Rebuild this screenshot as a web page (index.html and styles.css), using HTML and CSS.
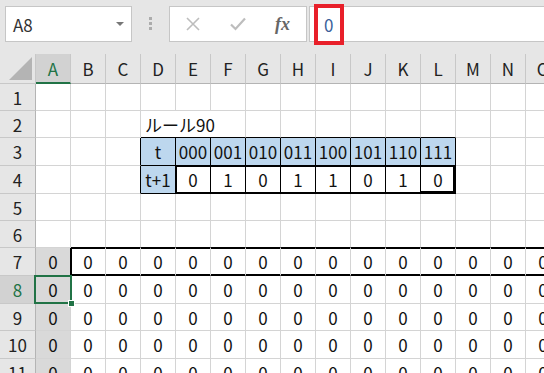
FILE: index.html
```html
<!DOCTYPE html>
<html lang="ja">
<head>
    <meta charset="UTF-8">
    <meta name="viewport" content="width=device-width, initial-scale=1.0">
    <title>ルール90</title>
    <link rel="stylesheet" href="styles.css">
</head>
<body>
    <div class="topbar">
        <div class="namebox">
            <span>A8</span>
            <span class="caret"></span>
        </div>
        <div class="dots"><span></span><span></span><span></span></div>
        <div class="fxbox">
            <span class="fxbtn">
                <svg width="14" height="14" viewBox="0 0 14 14"><path d="M1 1 L13 13 M13 1 L1 13" stroke="#bdbdbd" stroke-width="1.6" fill="none"/></svg>
            </span>
            <span class="fxbtn">
                <svg width="16" height="14" viewBox="0 0 16 14"><path d="M1 7.5 L5.5 12 L15 1.5" stroke="#bdbdbd" stroke-width="2.2" fill="none"/></svg>
            </span>
            <span class="fxbtn fx">fx</span>
        </div>
        <div class="fxinput">
            <span>0</span>
            <span class="mark"></span>
        </div>
    </div>

    <div class="sheet">
        <!-- header -->
        <div class="c h corner"><svg width="23" height="23" viewBox="0 0 23 23"><path d="M23 0 L23 23 L0 23 Z" fill="#b4b4b4"/></svg></div>
        <div class="c h ch sel-h">A</div>
        <div class="c h ch">B</div>
        <div class="c h ch">C</div>
        <div class="c h ch">D</div>
        <div class="c h ch">E</div>
        <div class="c h ch">F</div>
        <div class="c h ch">G</div>
        <div class="c h ch">H</div>
        <div class="c h ch">I</div>
        <div class="c h ch">J</div>
        <div class="c h ch">K</div>
        <div class="c h ch">L</div>
        <div class="c h ch">M</div>
        <div class="c h ch">N</div>
        <div class="c h ch">O</div>

        <!-- 1 -->
        <div class="c h rh">1</div>
        <div class="c"></div><div class="c"></div><div class="c"></div><div class="c"></div><div class="c"></div>
        <div class="c"></div><div class="c"></div><div class="c"></div><div class="c"></div><div class="c"></div>
        <div class="c"></div><div class="c"></div><div class="c"></div><div class="c"></div><div class="c"></div>

        <!-- 2 -->
        <div class="c h rh">2</div>
        <div class="c"></div><div class="c"></div><div class="c"></div>
        <div class="c title bk-b">ルール90</div>
        <div class="c bk-b"></div><div class="c bk-b"></div><div class="c bk-b"></div>
        <div class="c bk-b"></div><div class="c bk-b"></div><div class="c bk-b"></div>
        <div class="c"></div><div class="c"></div><div class="c"></div>

        <!-- 3 -->
        <div class="c h rh">3</div>
        <div class="c"></div><div class="c"></div><div class="c bk-r"></div>
        <div class="c blue bk">t</div>
        <div class="c blue bk">000</div>
        <div class="c blue bk">001</div>
        <div class="c blue bk">010</div>
        <div class="c blue bk">011</div>
        <div class="c blue bk">100</div>
        <div class="c blue bk">101</div>
        <div class="c blue bk">110</div>
        <div class="c blue bk">111</div>
        <div class="c"></div><div class="c"></div><div class="c"></div>

        <!-- 4 -->
        <div class="c h rh">4</div>
        <div class="c"></div><div class="c"></div><div class="c bk-r"></div>
        <div class="c blue bk">t+1</div>
        <div class="c bk thick first">0</div>
        <div class="c bk thick">1</div>
        <div class="c bk thick">0</div>
        <div class="c bk thick">1</div>
        <div class="c bk thick">1</div>
        <div class="c bk thick">0</div>
        <div class="c bk thick">1</div>
        <div class="c bk thick last">0</div>
        <div class="c"></div><div class="c"></div><div class="c"></div>

        <!-- 5 -->
        <div class="c h rh">5</div>
        <div class="c"></div><div class="c"></div><div class="c"></div><div class="c"></div><div class="c"></div>
        <div class="c"></div><div class="c"></div><div class="c"></div><div class="c"></div><div class="c"></div>
        <div class="c"></div><div class="c"></div><div class="c"></div><div class="c"></div><div class="c"></div>

        <!-- 6 -->
        <div class="c h rh">6</div>
        <div class="c"></div>
        <div class="c bk-b"></div><div class="c bk-b"></div><div class="c bk-b"></div><div class="c bk-b"></div><div class="c bk-b"></div>
        <div class="c bk-b"></div><div class="c bk-b"></div><div class="c bk-b"></div><div class="c bk-b"></div><div class="c bk-b"></div>
        <div class="c bk-b"></div><div class="c bk-b"></div><div class="c bk-b"></div><div class="c bk-b"></div>

        <!-- 7 -->
        <div class="c h rh">7</div>
        <div class="c gray bk-r">0</div>
        <div class="c bk-b thick first">0</div>
        <div class="c bk-b thick">0</div><div class="c bk-b thick">0</div><div class="c bk-b thick">0</div><div class="c bk-b thick">0</div>
        <div class="c bk-b thick">0</div><div class="c bk-b thick">0</div><div class="c bk-b thick">0</div><div class="c bk-b thick">0</div>
        <div class="c bk-b thick">0</div><div class="c bk-b thick">0</div><div class="c bk-b thick">0</div><div class="c bk-b thick">0</div>
        <div class="c bk-b thick">0</div>

        <!-- 8 -->
        <div class="c h rh sel-h">8</div>
        <div class="c gray active">0<span class="selbox"><span class="handle"></span></span></div>
        <div class="c">0</div><div class="c">0</div><div class="c">0</div><div class="c">0</div><div class="c">0</div>
        <div class="c">0</div><div class="c">0</div><div class="c">0</div><div class="c">0</div><div class="c">0</div>
        <div class="c">0</div><div class="c">0</div><div class="c">0</div><div class="c">0</div>

        <!-- 9 -->
        <div class="c h rh">9</div>
        <div class="c gray">0</div>
        <div class="c">0</div><div class="c">0</div><div class="c">0</div><div class="c">0</div><div class="c">0</div>
        <div class="c">0</div><div class="c">0</div><div class="c">0</div><div class="c">0</div><div class="c">0</div>
        <div class="c">0</div><div class="c">0</div><div class="c">0</div><div class="c">0</div>

        <!-- 10 -->
        <div class="c h rh">10</div>
        <div class="c gray">0</div>
        <div class="c">0</div><div class="c">0</div><div class="c">0</div><div class="c">0</div><div class="c">0</div>
        <div class="c">0</div><div class="c">0</div><div class="c">0</div><div class="c">0</div><div class="c">0</div>
        <div class="c">0</div><div class="c">0</div><div class="c">0</div><div class="c">0</div>

        <!-- 11 -->
        <div class="c h rh">11</div>
        <div class="c gray">0</div>
        <div class="c">0</div><div class="c">0</div><div class="c">0</div><div class="c">0</div><div class="c">0</div>
        <div class="c">0</div><div class="c">0</div><div class="c">0</div><div class="c">0</div><div class="c">0</div>
        <div class="c">0</div><div class="c">0</div><div class="c">0</div><div class="c">0</div>
    </div>
</body>
</html>
```

FILE: styles.css
```css
body {
    margin: 0;
    width: 544px;
    height: 373px;
    overflow: hidden;
    background-color: #fff;
    font-family: "Noto Sans CJK JP", "Liberation Sans", sans-serif;
}

/* formula bar */
.topbar {
    display: flex;
    align-items: flex-start;
    height: 54px;
    padding-top: 6px;
    box-sizing: border-box;
    background-color: #e6e6e6;
}

.namebox {
    margin-left: 5px;
    width: 127px;
    height: 36px;
    box-sizing: border-box;
    border: 1px solid #c6c6c6;
    background-color: #fff;
    display: flex;
    align-items: center;
    justify-content: space-between;
    padding: 0 7px 0 7px;
    font-size: 17px;
    color: #333;
}

.caret {
    width: 0;
    height: 0;
    border-left: 4px solid transparent;
    border-right: 4px solid transparent;
    border-top: 4px solid #777;
}

.dots {
    margin-left: 17px;
    margin-top: 11px;
    display: flex;
    flex-direction: column;
    gap: 2px;
}

.dots span {
    width: 3px;
    height: 3px;
    background-color: #acacac;
}

.fxbox {
    margin-left: 17px;
    width: 138px;
    height: 36px;
    box-sizing: border-box;
    border: 1px solid #c6c6c6;
    background-color: #fff;
    display: flex;
    align-items: center;
}

.fxbtn {
    width: 45px;
    display: flex;
    justify-content: center;
    align-items: center;
}

.fx {
    font-family: "Liberation Serif", serif;
    font-style: italic;
    font-weight: bold;
    font-size: 18px;
    color: #666;
}

.fxinput {
    position: relative;
    margin-left: 2px;
    flex: 1;
    height: 36px;
    box-sizing: border-box;
    border: 1px solid #c6c6c6;
    border-right: none;
    background-color: #fff;
    display: flex;
    align-items: center;
    padding-left: 14px;
    font-size: 17px;
    color: #3b5f9a;
}

.mark {
    position: absolute;
    left: 4px;
    top: -3px;
    width: 30px;
    height: 41px;
    box-sizing: border-box;
    border: 4px solid #e8202a;
}

/* sheet grid */
.sheet {
    display: grid;
    grid-template-columns: 36px repeat(15, 35px);
    grid-template-rows: 30px 27px 27px 28px 28px 27px 27px 28px 28px 27px 28px 27px;
    font-size: 17px;
}

.c {
    box-sizing: border-box;
    border-right: 1px solid #d4d4d4;
    border-bottom: 1px solid #d4d4d4;
    display: flex;
    align-items: center;
    justify-content: center;
    line-height: 1;
    color: #111;
    white-space: nowrap;
}

.h {
    background-color: #e6e6e6;
    border-color: #c8c8c8;
    color: #222;
}

.ch {
    border-bottom-color: #b4b4b4;
}

.rh {
    border-right-color: #b4b4b4;
}

.corner {
    align-items: flex-end;
    justify-content: flex-end;
    padding: 0 3px 3px 0;
}

.sel-h {
    background-color: #d2d2d2;
    color: #217346;
}

.ch.sel-h {
    border-bottom: 2px solid #217346;
}

.title {
    grid-column: span 3;
    justify-content: flex-start;
    padding-left: 4px;
}

.blue {
    background-color: #bdd7ee;
}

.gray {
    background-color: #d9d9d9;
}

.bk {
    border-color: #000;
}

.bk-r {
    border-right-color: #000;
}

.bk-b {
    border-bottom-color: #000;
}

.thick {
    box-shadow: inset 0 1px #000, inset 0 -1px #000;
}

.thick.first {
    box-shadow: inset 0 1px #000, inset 0 -1px #000, inset 1px 0 #000;
}

.thick.last {
    box-shadow: inset 0 1px #000, inset 0 -2px #000, inset -2px 0 #000;
}

/* active cell */
.active {
    position: relative;
}

.selbox {
    position: absolute;
    left: -2px;
    top: -1px;
    right: -2px;
    bottom: -1px;
    border: 2px solid #217346;
}

.handle {
    position: absolute;
    right: -5px;
    bottom: -5px;
    width: 5px;
    height: 5px;
    background-color: #217346;
    border: 1px solid #fff;
}
```
